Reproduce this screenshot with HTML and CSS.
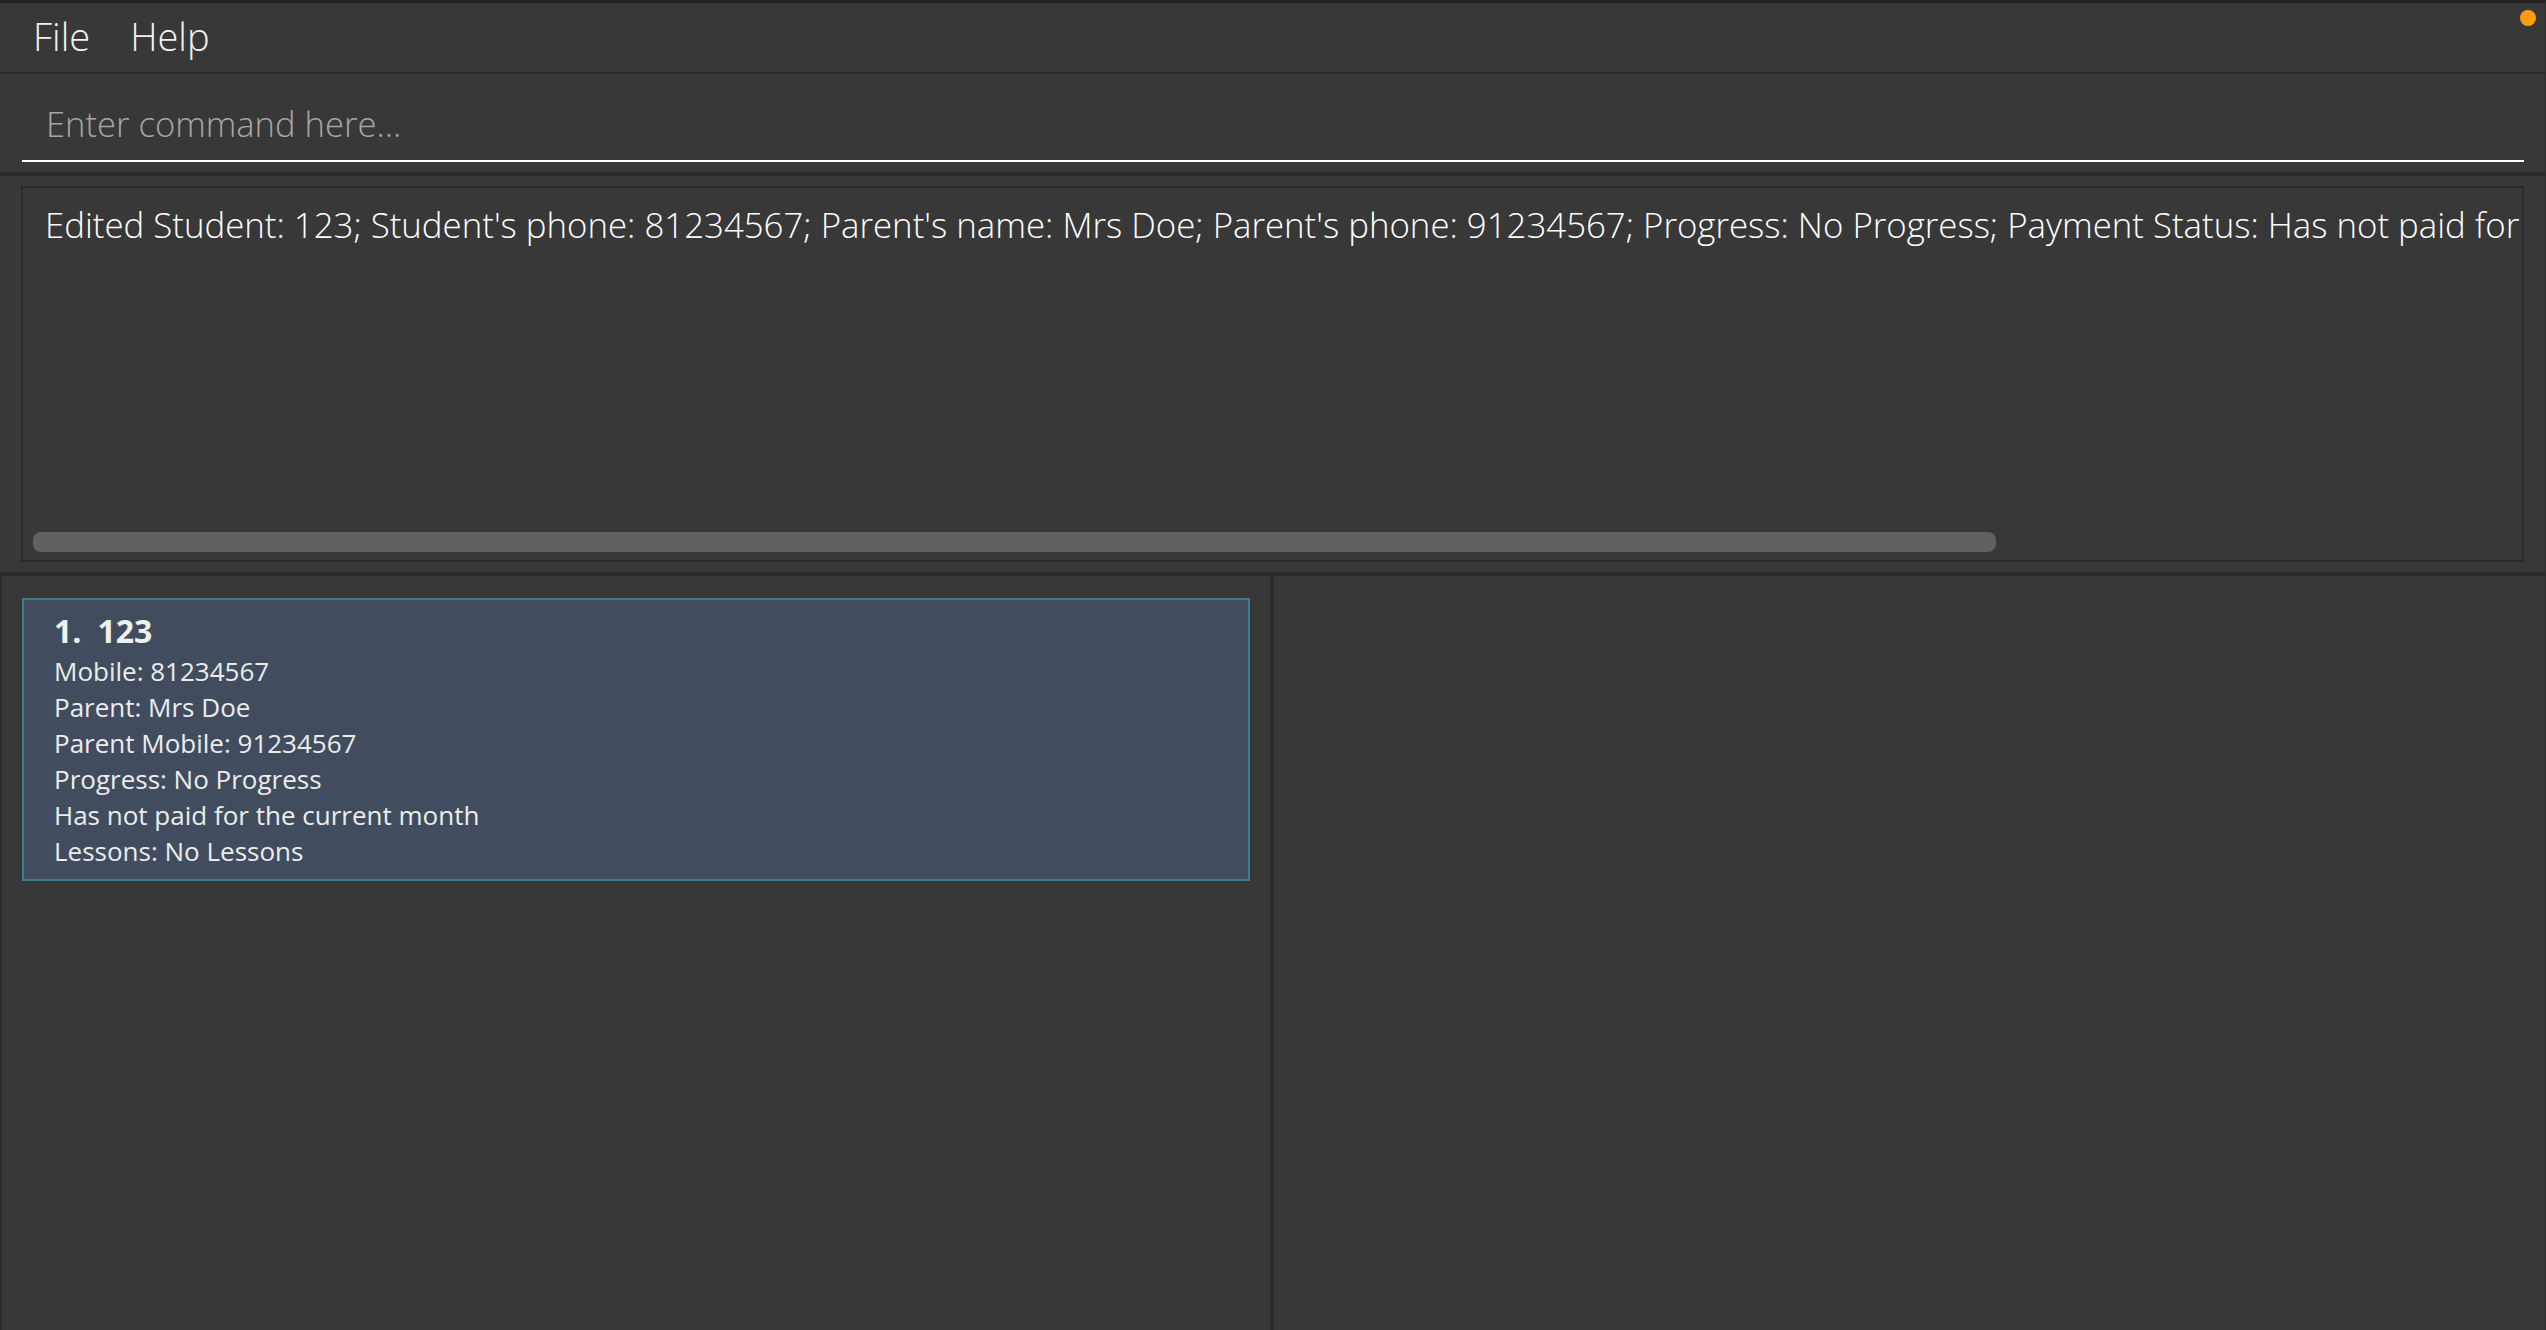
FILE: index.html
```html
<!DOCTYPE html>
<html lang="en">
<head>
<meta charset="utf-8">
<title>TutorsPet</title>
<link rel="stylesheet" href="styles.css">
</head>
<body>
<div class="app">
  <span class="status-dot"></span>
  <nav class="menubar">
    <span class="menu-item">File</span>
    <span class="menu-item">Help</span>
  </nav>
  <div class="command-area">
    <input class="command-input" type="text" placeholder="Enter command here...">
  </div>
  <div class="band"></div>
  <div class="result-area">
    <div class="result-box">
      <div class="result-text">Edited Student: 123; Student's phone: 81234567; Parent's name: Mrs Doe; Parent's phone: 91234567; Progress: No Progress; Payment Status: Has not paid for the current month; Lessons: No Lessons</div>
      <div class="scroll-track"><div class="scroll-thumb"></div></div>
    </div>
  </div>
  <div class="band"></div>
  <div class="panes">
    <section class="pane pane-left">
      <article class="card">
        <div class="card-title"><span class="card-index">1.</span><span class="card-name">123</span></div>
        <div class="card-line">Mobile: 81234567</div>
        <div class="card-line">Parent: Mrs Doe</div>
        <div class="card-line">Parent Mobile: 91234567</div>
        <div class="card-line">Progress: No Progress</div>
        <div class="card-line">Has not paid for the current month</div>
        <div class="card-line">Lessons: No Lessons</div>
      </article>
    </section>
    <div class="divider"></div>
    <section class="pane pane-right"></section>
  </div>
</div>
</body>
</html>
```

FILE: styles.css
```css
html, body {
  margin: 0;
  padding: 0;
  background: #383838;
}

body {
  font-family: "Open Sans", "Noto Sans", "DejaVu Sans", sans-serif;
  color: #ffffff;
}

.app {
  position: relative;
  height: 1330px;
  display: flex;
  flex-direction: column;
  border-top: 3px solid #222222;
  border-right: 1px solid #2a2a2a;
  box-sizing: border-box;
  overflow: hidden;
}

.status-dot {
  position: absolute;
  top: 7px;
  right: 9px;
  width: 16px;
  height: 16px;
  border-radius: 50%;
  background: #ff9c10;
}

.menubar {
  height: 69px;
  display: flex;
  align-items: center;
  gap: 40px;
  padding-left: 33px;
  border-bottom: 2px solid #2a2a2a;
  flex: none;
}

.menu-item {
  font-size: 38px;
  font-weight: 300;
  color: #f2f2f2;
  line-height: 1;
  padding-bottom: 4px;
}

.command-area {
  flex: none;
  padding: 14px 21px 10px 22px;
}

.command-input {
  display: block;
  width: 100%;
  box-sizing: border-box;
  height: 74px;
  padding: 0 0 2px 24px;
  margin: 0;
  border: none;
  border-bottom: 2px solid #ffffff;
  background: transparent;
  font-family: "Open Sans", "Noto Sans", sans-serif;
  font-size: 34.6px;
  font-weight: 300;
  color: #ffffff;
  outline: none;
}

.command-input::placeholder {
  color: #a6a6a6;
  opacity: 1;
}

.band {
  flex: none;
  height: 4px;
  background: #2b2b2b;
}

.result-area {
  flex: none;
  padding: 10px 21px 10px 21px;
}

.result-box {
  height: 376px;
  box-sizing: border-box;
  border: 2px solid #2a2a2a;
  display: flex;
  flex-direction: column;
  padding: 13px 0 8px 0;
}

.result-text {
  white-space: nowrap;
  overflow: hidden;
  font-size: 34.8px;
  font-weight: 300;
  color: #ffffff;
  padding-left: 22px;
  line-height: 47px;
}

.scroll-track {
  margin-top: auto;
  padding: 0 10px;
}

.scroll-thumb {
  width: 1963px;
  height: 20px;
  border-radius: 8px;
  background: #616161;
}

.panes {
  flex: 1;
  display: flex;
  min-height: 0;
}

.pane {
  box-sizing: border-box;
}

.pane-left {
  width: 1270px;
  border-left: 2px solid #2a2a2a;
  padding: 22px 20px 0 20px;
}

.divider {
  width: 4px;
  background: #2b2b2b;
}

.pane-right {
  flex: 1;
}

.card {
  background: #414d5f;
  border: 2px solid #3d7d92;
  padding: 9px 30px 10px 30px;
}

.card-title {
  font-size: 32px;
  font-weight: 700;
  line-height: 44px;
  color: #f0f0f0;
}

.card-index {
  margin-right: 16px;
}

.card-line {
  font-size: 26px;
  line-height: 36px;
  color: #ececec;
}
```
